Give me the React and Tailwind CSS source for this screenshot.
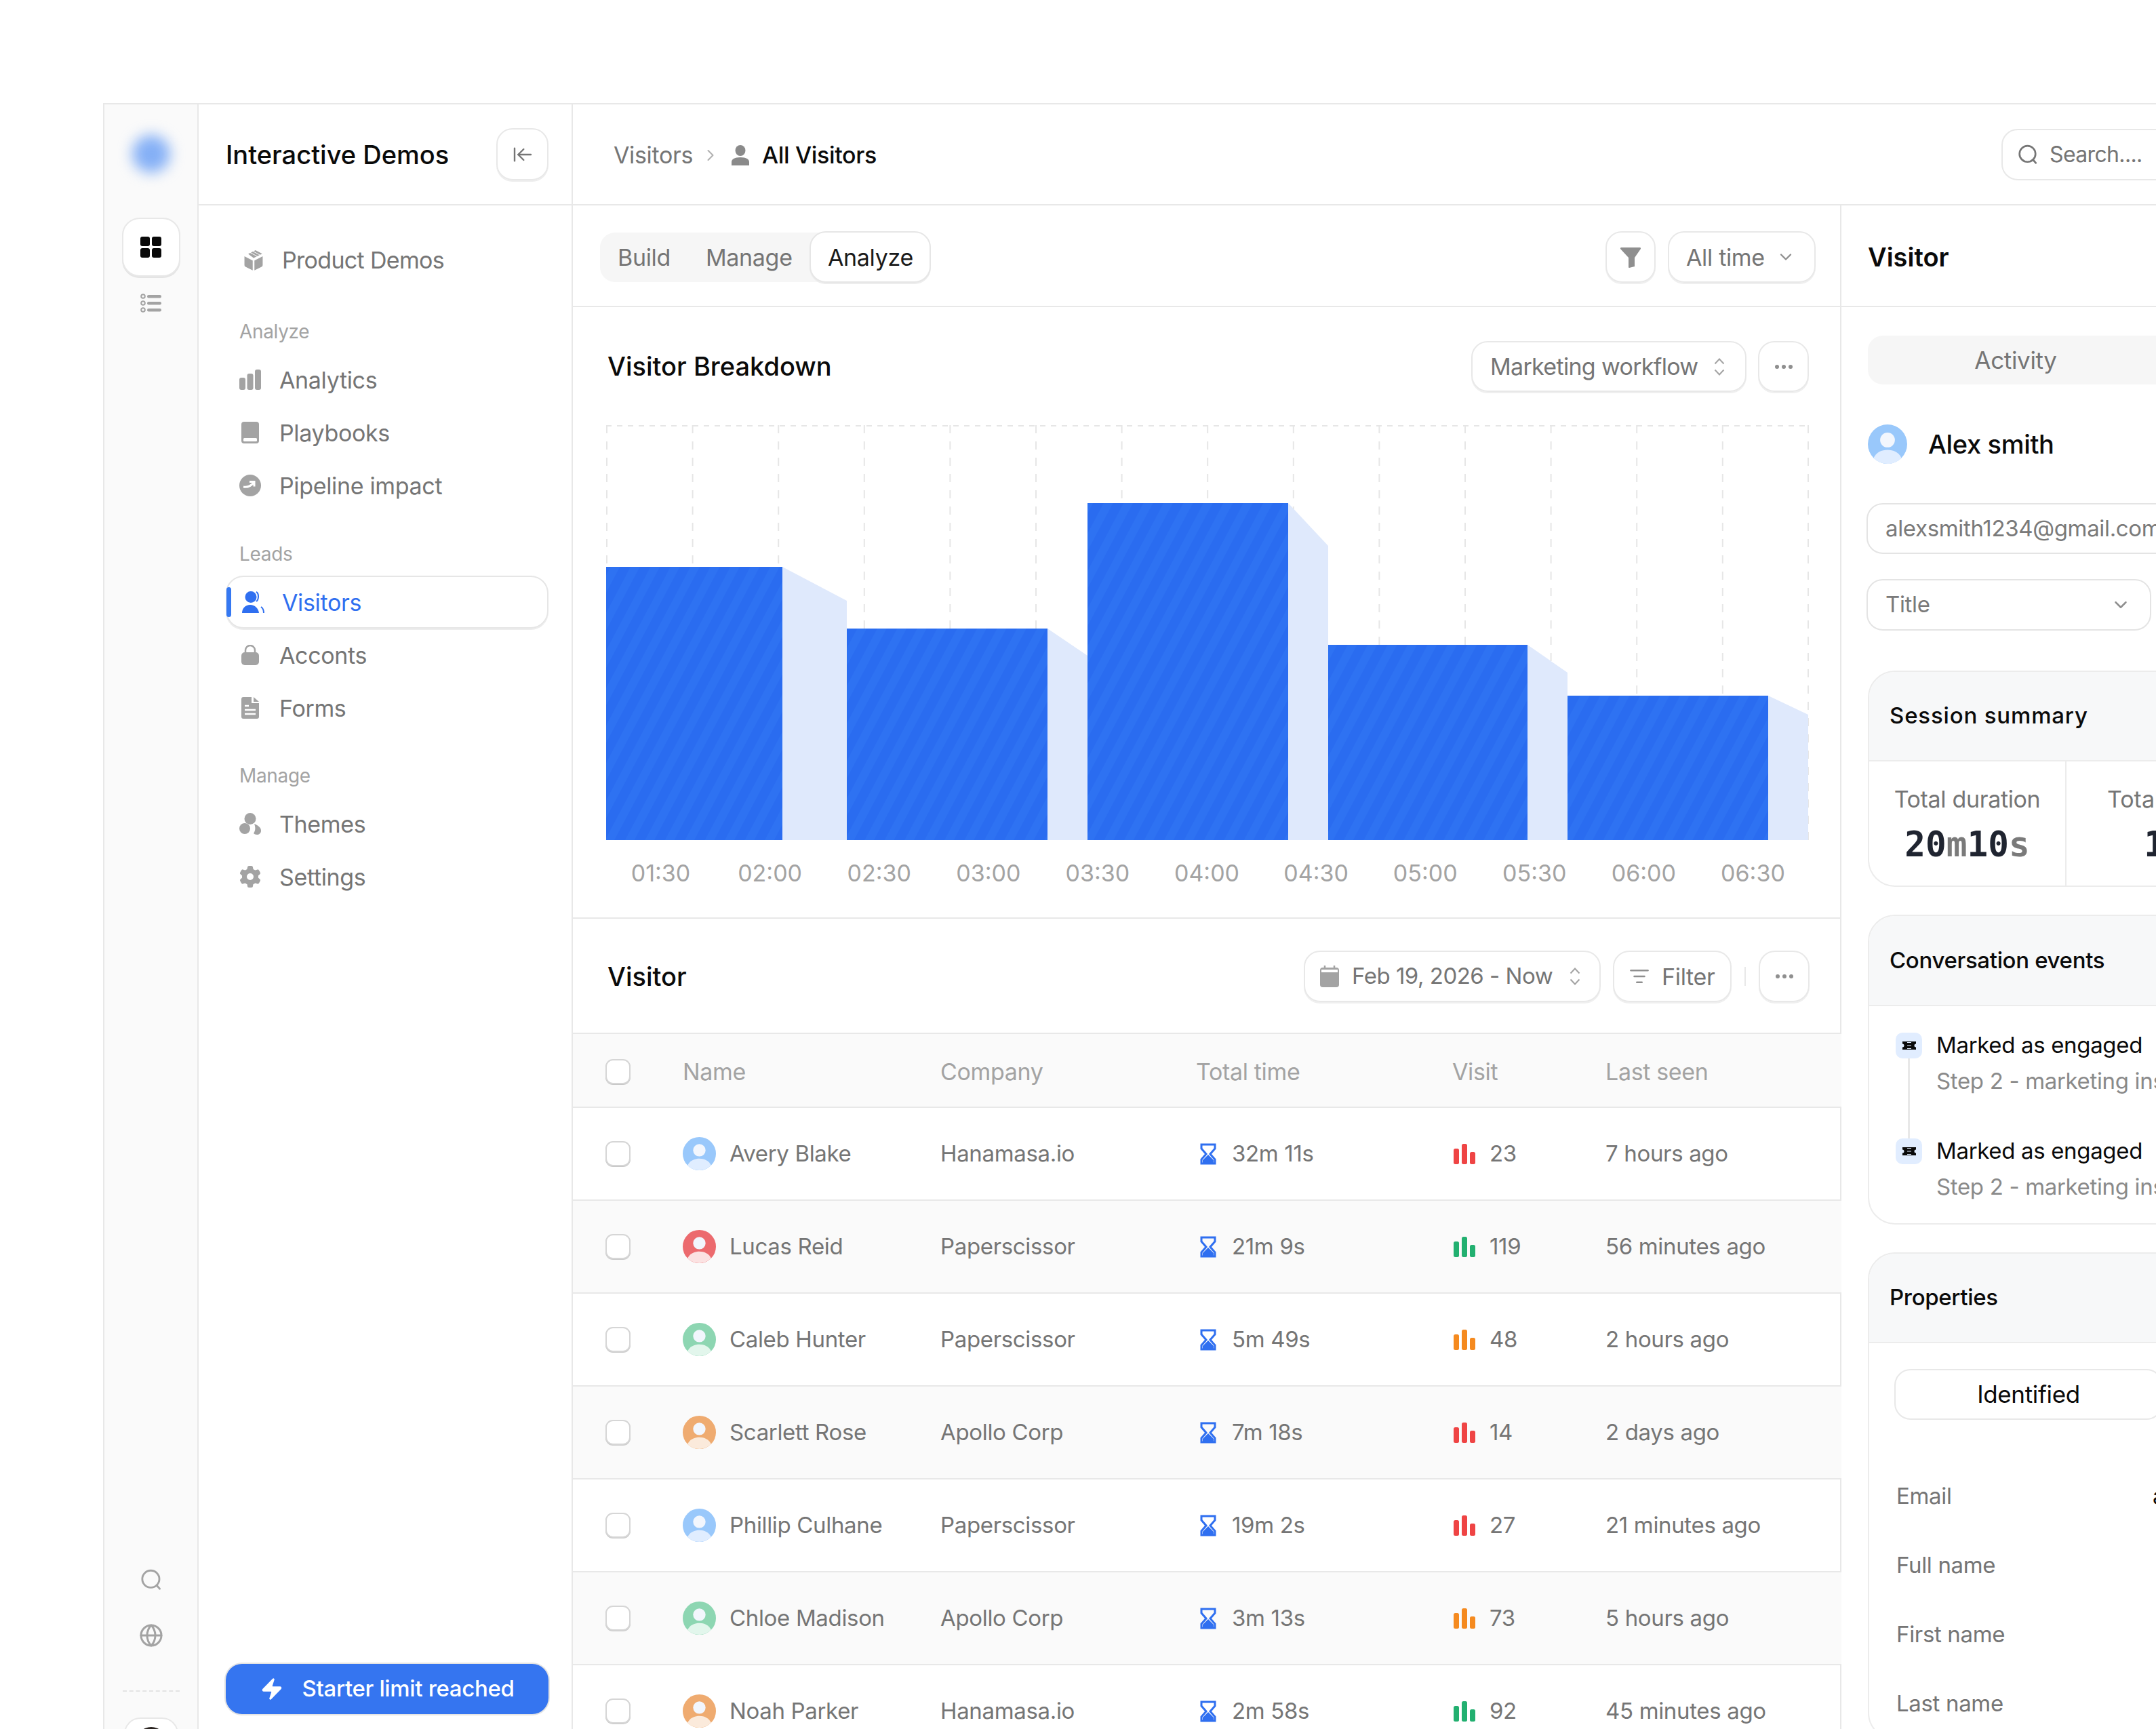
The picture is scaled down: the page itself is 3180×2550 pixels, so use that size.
import React from 'react'
import { ArrowLeftToLine, ChevronRight, ChevronDown, ListFilter, Globe, Zap } from 'lucide-react'
import { FaGear } from 'react-icons/fa6'

const Box = () => (
    <svg viewBox="0 0 24 24" className="w-[34px] h-[34px]" fill="#a3a3a3">
        <path d="M2.5 8.5l8.6 4.3v10.4l-7.5-3.8a2 2 0 01-1.1-1.8z" />
        <path d="M21.5 8.5l-8.6 4.3v10.4l7.5-3.8a2 2 0 001.1-1.8z" />
        <path d="M12 3.2l2-1 7 3.6-2.2 1.1zM9.2 4.6l2-1 7 3.6-2.2 1.1zM6.4 6l2-1 7 3.6-3.4 1.7z" />
    </svg>
)
const Bars = () => (
    <svg viewBox="0 0 32 30" className="w-[32px] h-[30px]" fill="#a3a3a3">
        <rect x="0" y="12" width="9" height="18" rx="3" />
        <rect x="11.5" y="6" width="9" height="24" rx="3" />
        <rect x="23" y="0" width="9" height="30" rx="3" />
    </svg>
)
const Book = () => (
    <svg viewBox="0 0 26 32" className="w-[26px] h-[32px] mx-[3px]">
        <rect width="26" height="32" rx="4" fill="#a3a3a3" />
        <rect x="3" y="24" width="20" height="5" rx="1.5" fill="#fff" />
    </svg>
)
const Pipeline = () => (
    <svg viewBox="0 0 32 32" className="w-[32px] h-[32px]">
        <circle cx="16" cy="16" r="16" fill="#a3a3a3" />
        <path d="M6 18c6 1 11-1 15-6M15 10.500h7v7" fill="none" stroke="#fff" strokeWidth="3" />
    </svg>
)
const UsersBlue = () => (
    <svg viewBox="0 0 34 32" className="w-[34px] h-[32px]" fill="#2f6ff0">
        <circle cx="13" cy="8.500" r="8.500" />
        <path d="M0 32c0-7 5-12 12-12s12 5 13 12z" />
        <path d="M21 1c4 2 4 11 0 14M28 23c3 2 4 5 4 9" fill="none" stroke="#2f6ff0" strokeWidth="2" />
    </svg>
)
const Lock = () => (
    <svg viewBox="0 0 26 30" className="w-[26px] h-[30px] mx-[3px]">
        <path d="M6 13V8a7 7 0 0114 0v5" fill="none" stroke="#a3a3a3" strokeWidth="2.500" />
        <rect y="11" width="26" height="19" rx="5" fill="#a3a3a3" />
    </svg>
)
const FileIcon = () => (
    <svg viewBox="0 0 26 32" className="w-[26px] h-[32px] mx-[3px]">
        <path d="M3 0h12v9h11v20a3 3 0 01-3 3H3a3 3 0 01-3-3V3a3 3 0 013-3z" fill="#a3a3a3" />
        <path d="M18 0l8 7h-8z" fill="#a3a3a3" />
        <path d="M5 13h6M5 19h16M5 25h16" stroke="#fff" strokeWidth="2.500" />
    </svg>
)
const Themes = () => (
    <svg viewBox="0 0 32 32" className="w-[32px] h-[32px]" fill="#a3a3a3">
        <circle cx="16" cy="8.500" r="8.500" />
        <circle cx="8" cy="23" r="8" />
        <path d="M22 16c5 2 10 5 10 10 0 4-3 6-6 6-2 0-4-1-5-2 3-4 3-9 1-14z" />
    </svg>
)
const ListIcon = () => (
    <svg viewBox="0 0 32 28" className="w-[32px] h-[28px]" fill="none">
        <circle cx="4" cy="4" r="2.800" stroke="#a3a3a3" strokeWidth="2" />
        <circle cx="4" cy="14" r="2.800" stroke="#a3a3a3" strokeWidth="2" />
        <circle cx="4" cy="24" r="2.800" stroke="#a3a3a3" strokeWidth="2" />
        <rect x="10" y="2" width="21" height="4.500" rx="2.200" fill="#a3a3a3" />
        <rect x="10" y="12" width="21" height="4.500" rx="2.200" fill="#a3a3a3" />
        <rect x="10" y="22" width="21" height="4.500" rx="2.200" fill="#a3a3a3" />
    </svg>
)
const SearchQ = ({ color, size }) => (
    <svg viewBox="0 0 28 28" width={size} height={size} fill="none" stroke={color} strokeWidth="2.500" strokeLinecap="round">
        <circle cx="13.500" cy="13" r="11" />
        <path d="M21 21l4 4.500" />
    </svg>
)
const Funnel = () => (
    <svg viewBox="0 0 32 32" className="w-[32px] h-[32px]" fill="#8f8f8f">
        <path d="M2 2h28c1 0 1 1 1 2l-9 13v13l-8 2c-1 0-1-1-1-1V17L1 4c0-1 0-2 1-2z" />
    </svg>
)
const UpDown = () => (
    <svg viewBox="0 0 20 28" className="w-[20px] h-[28px]" fill="none" stroke="#a3a3a3" strokeWidth="2">
        <path d="M3.500 9.500L10 2.500l6.500 7M3.500 18.500l6.500 7 6.500-7" />
    </svg>
)
const Dots = () => (
    <svg viewBox="0 0 28 8" className="w-[28px] h-[8px]" fill="#8f8f8f">
        <circle cx="4" cy="4" r="3" />
        <circle cx="14" cy="4" r="3" />
        <circle cx="24" cy="4" r="3" />
    </svg>
)
const Calendar = () => (
    <svg viewBox="0 0 28 32" className="w-[28px] h-[32px]">
        <rect y="3" width="28" height="29" rx="4" fill="#a3a3a3" />
        <rect x="2" y="6" width="24" height="4" fill="#fff" />
        <path d="M7 0v6M21 0v6" stroke="#a3a3a3" strokeWidth="2.500" />
    </svg>
)
const Hourglass = () => (
    <svg viewBox="0 0 24 32" className="w-[24px] h-[32px]">
        <path d="M2 2h20v6l-7 8 7 8v6H2v-6l7-8-7-8z" fill="none" stroke="#2f6ff0" strokeWidth="3" />
        <path d="M12 17l8 8v6H4v-6z" fill="#2f6ff0" />
    </svg>
)
const VisitBars = ({ color }) => (
    <svg viewBox="0 0 32 30" className="w-[32px] h-[30px]" fill={color}>
        <rect x="0" y="7" width="8" height="23" rx="2.500" />
        <rect x="12" y="0" width="8" height="30" rx="2.500" />
        <rect x="24" y="12" width="8" height="18" rx="2.500" />
    </svg>
)
const Ticket = () => (
    <svg viewBox="0 0 20 12" className="w-[20px] h-[12px]">
        <path d="M0 0h20v3.500a2.500 2.500 0 000 5V12H0V8.500a2.500 2.500 0 000-5z" fill="#0a0a0a" />
        <path d="M7 1.500h6M7 6h6M7 10.500h6" stroke="#e1edff" strokeWidth="1" />
    </svg>
)
const Avatar = ({ bg, body, size }) => (
    <svg viewBox="0 0 48 48" width={size} height={size} className="shrink-0">
        <circle cx="24" cy="24" r="24" fill={bg} />
        <circle cx="24" cy="19" r="9" fill="#f2f6fd" />
        <path d="M7 41c3-7 10-10 17-10s14 3 17 10c-4 4-10 7-17 7s-13-3-17-7z" fill={body} />
    </svg>
)

const avatars = {
    blue: ['#99c8fb', '#e0edff'],
    red: ['#ec6a6e', '#fbe2e2'],
    green: ['#8dd6b2', '#e2f6ec'],
    orange: ['#efab70', '#fbeadb'],
}

const rows = [
    ['Avery Blake', 'Hanamasa.io', '32m 11s', '23', '7 hours ago', 'blue', '#ef4444'],
    ['Lucas Reid', 'Paperscissor', '21m 9s', '119', '56 minutes ago', 'red', '#22b070'],
    ['Caleb Hunter', 'Paperscissor', '5m 49s', '48', '2 hours ago', 'green', '#f58a1f'],
    ['Scarlett Rose', 'Apollo Corp', '7m 18s', '14', '2 days ago', 'orange', '#ef4444'],
    ['Phillip Culhane', 'Paperscissor', '19m 2s', '27', '21 minutes ago', 'blue', '#ef4444'],
    ['Chloe Madison', 'Apollo Corp', '3m 13s', '73', '5 hours ago', 'green', '#f58a1f'],
    ['Noah Parker', 'Hanamasa.io', '2m 58s', '92', '45 minutes ago', 'orange', '#22b070'],
]

const labels = ['01:30', '02:00', '02:30', '03:00', '03:30', '04:00', '04:30', '05:00', '05:30', '06:00', '06:30']

const NavItem = ({ icon, label }) => (
    <div className="flex items-center h-[78px] pl-[20px] gap-[27px] text-[#757575]">
        {icon}
        <span>{label}</span>
    </div>
)

const SectionLabel = ({ children, top }) => (
    <div className={`h-[40px] flex items-center pl-[20px] text-[28px] text-[#a3a3a3] mb-[12px] ${top}`}>{children}</div>
)

const Sidebar = () => (
    <div className="w-[552px] h-full shrink-0 border-r-2 border-[#e8e8e8] flex flex-col">
        <div className="h-[149px] border-b-2 border-[#e8e8e8] flex items-center justify-between pl-[40px] pr-[34px]">
            <span className="text-[38px] font-medium text-[#0a0a0a] tracking-normal mt-[2px]">Interactive Demos</span>
            <button className="w-[77px] h-[77px] rounded-[24px] border-2 border-[#e8e8e8] shadow-[0_2px_0_#ededed] flex items-center justify-center text-[#757575]">
                <ArrowLeftToLine size={32} strokeWidth={1.8} />
            </button>
        </div>
        <div className="flex-1 flex flex-col pl-[40px] pr-[34px] pt-[41px] pb-[84px]">
            <div className="flex items-center h-[78px] pl-[24px] gap-[25px] text-[#757575]">
                <Box />
                <span className="tracking-[-0.02em]">Product Demos</span>
            </div>
            <SectionLabel top="mt-[47px]">Analyze</SectionLabel>
            <NavItem icon={<Bars />} label="Analytics" />
            <NavItem icon={<Book />} label="Playbooks" />
            <NavItem icon={<Pipeline />} label="Pipeline impact" />
            <SectionLabel top="mt-[42px]">Leads</SectionLabel>
            <div className="relative flex items-center h-[78px] pl-[22px] gap-[25px] rounded-[26px] border-2 border-[#e6e6e6] shadow-[0_2px_0_#ededed] text-[#2f6ff0]">
                <div className="absolute left-[-1px] top-[15px] w-[7px] h-[44px] rounded-full bg-[#3578f2]"></div>
                <UsersBlue />
                <span>Visitors</span>
            </div>
            <NavItem icon={<Lock />} label="Acconts" />
            <NavItem icon={<FileIcon />} label="Forms" />
            <SectionLabel top="mt-[41px]">Manage</SectionLabel>
            <NavItem icon={<Themes />} label="Themes" />
            <NavItem icon={<FaGear size={32} color="#a3a3a3" />} label="Settings" />
            <button className="mt-auto h-[74px] rounded-[24px] bg-[#3575f0] ring-2 ring-[#e4e4e4] flex items-center justify-center gap-[26px] text-[33px] text-white font-medium">
                <Zap size={36} fill="#fff" strokeWidth={1} />
                <span>Starter limit reached</span>
            </button>
        </div>
    </div>
)

const Rail = () => (
    <div className="w-[139px] h-full shrink-0 bg-[#fafafa] border-r-2 border-[#e8e8e8] flex flex-col items-center">
        <div className="mt-[45px] w-[56px] h-[56px] rounded-full bg-[#85b0f6] blur-[10px]"></div>
        <button className="mt-[66px] w-[86px] h-[87px] rounded-[26px] bg-white border-2 border-[#e8e8e8] shadow-[0_2px_0_#e4e4e4] flex items-center justify-center">
            <div className="grid grid-cols-2 gap-[3px]">
                <div className="w-[14px] h-[14px] rounded-[3px] bg-[#0a0a0a]"></div>
                <div className="w-[14px] h-[14px] rounded-[3px] bg-[#0a0a0a]"></div>
                <div className="w-[14px] h-[14px] rounded-[3px] bg-[#0a0a0a]"></div>
                <div className="w-[14px] h-[14px] rounded-[3px] bg-[#0a0a0a]"></div>
            </div>
        </button>
        <div className="mt-[25px]"><ListIcon /></div>
        <div className="mt-auto flex flex-col items-center">
            <SearchQ color="#a3a3a3" size={32} />
            <Globe size={36} color="#a3a3a3" strokeWidth={2} className="mt-[48px]" />
            <div className="mt-[63px] w-[84px] border-t-2 border-dashed border-[#e4e4e4]"></div>
            <div className="mt-[38px] w-[80px] h-[79px] rounded-[24px] bg-white border-2 border-[#e8e8e8] flex justify-center">
                <div className="mt-[12px] w-[44px] h-[44px] rounded-full bg-[#2a2320]"></div>
            </div>
        </div>
    </div>
)

const Chart = () => (
    <svg viewBox="0 0 1774 613" className="w-[1774px] h-[613px] block">
        <defs>
            <pattern id="stripes" width="26" height="26" patternUnits="userSpaceOnUse" patternTransform="rotate(28)">
                <rect width="26" height="26" fill="#2a6cf0" />
                <rect width="12" height="26" fill="#2e72f2" />
            </pattern>
        </defs>
        <path d="M0 1H1774" stroke="#e6e6e6" strokeWidth="2" strokeDasharray="8 8" />
        {Array.from({ length: 15 }).map((_, i) => (
            <path key={i} d={`M${Math.min(i * 126.6 + 1, 1773)} 0V613`} stroke="#e6e6e6" strokeWidth="2" strokeDasharray="12 12" />
        ))}
        <g fill="#dfe9fc">
            <polygon points="260,209 355,259 355,612 260,612" />
            <polygon points="651,300 710,340 710,612 651,612" />
            <polygon points="1006,115 1065,178 1065,612 1006,612" />
            <polygon points="1359,324 1418,365 1418,612 1359,612" />
            <polygon points="1714,399 1773,427 1773,612 1714,612" />
        </g>
        <g fill="url(#stripes)">
            <rect x="0" y="209" width="260" height="403" />
            <rect x="355" y="300" width="296" height="312" />
            <rect x="710" y="115" width="296" height="497" />
            <rect x="1065" y="324" width="294" height="288" />
            <rect x="1418" y="399" width="296" height="213" />
        </g>
    </svg>
)

const Breakdown = () => (
    <div className="border-b-2 border-[#e8e8e8] pl-[49px] pr-[46px] pt-[50px] pb-[51px]">
        <div className="flex items-center justify-between h-[75px]">
            <span className="text-[38px] font-medium text-[#0a0a0a] tracking-normal pl-[2px]">Visitor Breakdown</span>
            <div className="flex items-center gap-[17px]">
                <button className="h-[75px] w-[406px] rounded-[24px] border-2 border-[#e8e8e8] shadow-[0_2px_0_#efefef] flex items-center justify-between pl-[26px] pr-[28px] text-[#757575]">
                    <span className="tracking-[-0.02em]">Marketing workflow</span>
                    <UpDown />
                </button>
                <button className="h-[75px] w-[75px] rounded-[24px] border-2 border-[#e8e8e8] shadow-[0_2px_0_#efefef] flex items-center justify-center">
                    <Dots />
                </button>
            </div>
        </div>
        <div className="mt-[49px]"><Chart /></div>
        <div className="mt-[22px] grid grid-cols-11 w-[1772px] h-[40px] items-center text-[#a3a3a3] tracking-normal">
            {labels.map(l => <span key={l} className="text-center">{l}</span>)}
        </div>
    </div>
)

const TableHeader = () => (
    <div className="relative -mr-[2px] h-[109px] pt-[3px] bg-[#fafafa] border-b-2 border-[#e8e8e8] grid grid-cols-[162px_380px_377px_378px_226px_1fr] items-center text-[#a3a3a3]">
        <div className="pl-[48px]"><Checkbox /></div>
        <span>Name</span>
        <span>Company</span>
        <span>Total time</span>
        <span>Visit</span>
        <span>Last seen</span>
    </div>
)

const Checkbox = () => (
    <div className="w-[37px] h-[37px] rounded-[11px] bg-white border-2 border-[#d6d6d6] shadow-[0_1px_0_#c9c9c9]"></div>
)

const Row = ({ row, index }) => {
    const [name, company, time, visit, seen, tone, barColor] = row
    return (
        <div className={`relative -mr-[2px] h-[137px] border-b-2 border-[#e8e8e8] grid grid-cols-[162px_380px_377px_378px_226px_1fr] items-center text-[33px] text-[#757575] ${index % 2 === 1 ? 'bg-[#fafafa]' : ''}`}>
            <div className="pl-[48px]"><Checkbox /></div>
            <div className="flex items-center gap-[20px]">
                <Avatar bg={avatars[tone][0]} body={avatars[tone][1]} size={49} />
                <span>{name}</span>
            </div>
            <span>{company}</span>
            <div className="flex items-center gap-[23px] pl-[6px]">
                <Hourglass />
                <span>{time}</span>
            </div>
            <div className="flex items-center gap-[21px] pl-[2px]">
                <VisitBars color={barColor} />
                <span>{visit}</span>
            </div>
            <span>{seen}</span>
        </div>
    )
}

const VisitorTable = () => (
    <div>
        <div className="border-b-2 border-[#e8e8e8] flex items-center justify-between pl-[49px] pr-[45px] pt-[47px] pb-[45px]">
            <span className="text-[38px] font-medium text-[#0a0a0a] tracking-normal pl-[2px]">Visitor</span>
            <div className="flex items-center h-[76px]">
                <button className="h-[76px] w-[438px] rounded-[24px] border-2 border-[#e8e8e8] shadow-[0_2px_0_#efefef] flex items-center pl-[22px] pr-[26px] text-[#757575]">
                    <Calendar />
                    <span className="ml-[19px] text-[33px] tracking-[-0.015em]">Feb 19, 2026 - Now</span>
                    <span className="ml-auto"><UpDown /></span>
                </button>
                <button className="ml-[18px] h-[76px] w-[175px] rounded-[24px] border-2 border-[#e8e8e8] shadow-[0_2px_0_#efefef] flex items-center pl-[22px] gap-[18px] text-[#757575]">
                    <ListFilter size={30} color="#8f8f8f" strokeWidth={2} />
                    <span>Filter</span>
                </button>
                <div className="ml-[19px] w-[2px] h-[28px] bg-[#e8e8e8]"></div>
                <button className="ml-[19px] h-[76px] w-[75px] rounded-[24px] border-2 border-[#e8e8e8] shadow-[0_2px_0_#efefef] flex items-center justify-center">
                    <Dots />
                </button>
            </div>
        </div>
        <TableHeader />
        {rows.map((r, i) => <Row key={r[0]} row={r} index={i} />)}
    </div>
)

const EventItem = ({ line }) => (
    <div className="flex gap-[21px]">
        <div className="flex flex-col items-center w-[39px] shrink-0">
            <div className="w-[39px] h-[38px] rounded-[10px] bg-[#e1edff] flex items-center justify-center"><Ticket /></div>
            {line && <div className="w-[3px] h-[118px] bg-[#e8e8e8]"></div>}
        </div>
        <div className="-mt-[3px] text-[33px]">
            <div className="text-[#0a0a0a] h-[44px] flex items-center whitespace-nowrap">Marked as engaged</div>
            <div className="text-[#8a8a8a] mt-[9px] h-[44px] flex items-center whitespace-nowrap">Step 2 - marketing insights</div>
        </div>
    </div>
)

const PropRow = ({ label, value }) => (
    <div className="h-[102px] flex items-center pl-[40px] whitespace-nowrap text-[33px]">
        <span className="w-[378px] text-[#757575] shrink-0">{label}</span>
        <span className="text-[#0a0a0a]">{value}</span>
    </div>
)

const VisitorPanel = () => (
    <div className="flex-1 min-w-0">
        <div className="h-[150px] border-b-2 border-[#e8e8e8] flex items-center pl-[39px]">
            <span className="text-[38px] font-semibold text-[#0a0a0a] tracking-normal mt-[4px]">Visitor</span>
        </div>
        <div className="pl-[39px] pr-[40px] pt-[42px]">
            <div className="h-[72px] rounded-[22px] bg-[#f6f6f6] flex">
                <div className="w-[436px] flex items-center justify-center text-[35px] text-[#757575]">Activity</div>
            </div>
            <div className="mt-[59px] flex items-center gap-[31px]">
                <Avatar bg="#99c8fb" body="#e0edff" size={58} />
                <span className="text-[38px] font-medium text-[#0a0a0a]">Alex smith</span>
            </div>
            <div className="mt-[58px] -ml-[2px] h-[75px] rounded-[24px] border-2 border-[#e4e4e4] flex items-center pl-[26px] text-[33px] text-[#7a7a7a] whitespace-nowrap">alexsmith1234@gmail.com</div>
            <div className="mt-[37px] -ml-[2px] h-[76px] w-[420px] rounded-[24px] border-2 border-[#e4e4e4] flex items-center justify-between pl-[26px] pr-[28px] text-[33px] text-[#7a7a7a]">
                <span>Title</span>
                <ChevronDown size={30} color="#8f8f8f" strokeWidth={2} />
            </div>
            <div className="mt-[59px] h-[319px] rounded-[40px] border-2 border-[#ececec] overflow-hidden">
                <div className="h-[132px] bg-[#f7f8f9] border-b-2 border-[#ececec] flex items-center pl-[30px] text-[33px] text-[#0a0a0a] font-medium tracking-[0.025em]">Session summary</div>
                <div className="flex h-[183px]">
                    <div className="w-[291px] border-r-2 border-[#ececec] text-center pt-[30px] whitespace-nowrap">
                        <div className="text-[#757575] h-[44px]">Total duration</div>
                        <div className="mt-[19px] font-['DejaVu_Sans_Mono',monospace] text-[51px] font-bold leading-[60px] tracking-normal text-[#1f2430]">20<span className="text-[#7a7a7a]">m</span>10<span className="text-[#7a7a7a]">s</span></div>
                    </div>
                    <div className="flex-1 text-center pt-[30px] whitespace-nowrap">
                        <div className="text-[#757575] h-[44px] tracking-normal">Total visits</div>
                        <div className="mt-[19px] font-['DejaVu_Sans_Mono',monospace] text-[51px] font-bold leading-[60px] tracking-normal text-[#1f2430]">12</div>
                    </div>
                </div>
            </div>
            <div className="mt-[41px] h-[457px] rounded-[40px] border-2 border-[#ececec] overflow-hidden">
                <div className="h-[133px] bg-[#f7f8f9] border-b-2 border-[#ececec] flex items-center pl-[30px] text-[33px] text-[#0a0a0a] font-medium">Conversation events</div>
                <div className="pl-[39px] pt-[39px]">
                    <EventItem line />
                    <EventItem />
                </div>
            </div>
            <div className="mt-[41px] rounded-[40px] border-2 border-[#ececec] overflow-hidden">
                <div className="h-[132px] bg-[#f7f8f9] border-b-2 border-[#ececec] flex items-center pl-[30px] text-[33px] text-[#0a0a0a] font-medium">Properties</div>
                <div className="pt-[38px] pl-[37px]">
                    <div className="h-[75px] w-[396px] rounded-[24px] border-2 border-[#e8e8e8] flex items-center justify-center text-[35px] text-[#0a0a0a]">Identified</div>
                </div>
                <div className="mt-[62px]">
                    <PropRow label="Email" value="alexsmith1234@gmail.com" />
                    <PropRow label="Full name" value="" />
                    <PropRow label="First name" value="" />
                    <PropRow label="Last name" value="" />
                </div>
            </div>
        </div>
    </div>
)

const App = () => {
    return (
        <div className="w-[3180px] h-[2550px] overflow-hidden bg-white pl-[152px] pt-[152px] font-['Inter',sans-serif] text-[34px] tracking-[-0.01em]">
            <div className="flex w-[3228px] h-[2460px] border-l-2 border-t-2 border-[#e8e8e8]">
                <Rail />
                <Sidebar />
                <div className="flex-1 min-w-0 flex flex-col">
                    <div className="h-[149px] shrink-0 border-b-2 border-[#e8e8e8] flex items-center justify-between pl-[60px] pr-[40px]">
                        <div className="flex items-center mt-[2px]">
                            <span className="text-[#757575]">Visitors</span>
                            <ChevronRight size={28} color="#b0b0b0" strokeWidth={1.8} className="ml-[12px]" />
                            <svg viewBox="0 0 26 30" className="w-[26px] h-[30px] ml-[17px]" fill="#8a8a8a">
                                <ellipse cx="13" cy="8" rx="7.500" ry="8" />
                                <path d="M0 30v-5c0-4 4-7 13-7s13 3 13 7v5z" />
                            </svg>
                            <span className="ml-[19px] font-medium text-[#0a0a0a]">All Visitors</span>
                        </div>
                        <div className="w-[388px] h-[76px] rounded-[24px] border-2 border-[#e8e8e8] flex items-center pl-[22px] gap-[17px] text-[32px] text-[#757575] tracking-[-0.02em]">
                            <SearchQ color="#757575" size={30} />
                            <span>Search....</span>
                        </div>
                    </div>
                    <div className="flex flex-1 min-h-0">
                        <div className="w-[1871px] shrink-0 border-r-2 border-[#e8e8e8]">
                            <div className="h-[150px] border-b-2 border-[#e8e8e8] flex items-center justify-between pl-[40px] pr-[36px] pt-[4px]">
                                <div className="relative flex h-[73px] w-[488px] rounded-[22px] bg-[#f6f6f6] items-center text-[#757575]">
                                    <span className="w-[130px] pl-[26px]">Build</span>
                                    <span className="w-[179px] pl-[26px]">Manage</span>
                                    <span className="h-[76px] w-[179px] rounded-[24px] bg-white border-2 border-[#e6e6e6] shadow-[0_2px_0_#ededed] flex items-center pl-[25px] text-[#1a1a1a]">Analyze</span>
                                </div>
                                <div className="flex items-center gap-[18px]">
                                    <button className="w-[74px] h-[76px] rounded-[24px] border-2 border-[#e8e8e8] shadow-[0_2px_0_#efefef] flex items-center justify-center">
                                        <Funnel />
                                    </button>
                                    <button className="w-[218px] h-[76px] rounded-[24px] border-2 border-[#e8e8e8] shadow-[0_2px_0_#efefef] flex items-center justify-between pl-[25px] pr-[28px] text-[#757575]">
                                        <span>All time</span>
                                        <ChevronDown size={28} color="#8f8f8f" strokeWidth={2} />
                                    </button>
                                </div>
                            </div>
                            <Breakdown />
                            <VisitorTable />
                        </div>
                        <VisitorPanel />
                    </div>
                </div>
            </div>
        </div>
    )
}

export default App
